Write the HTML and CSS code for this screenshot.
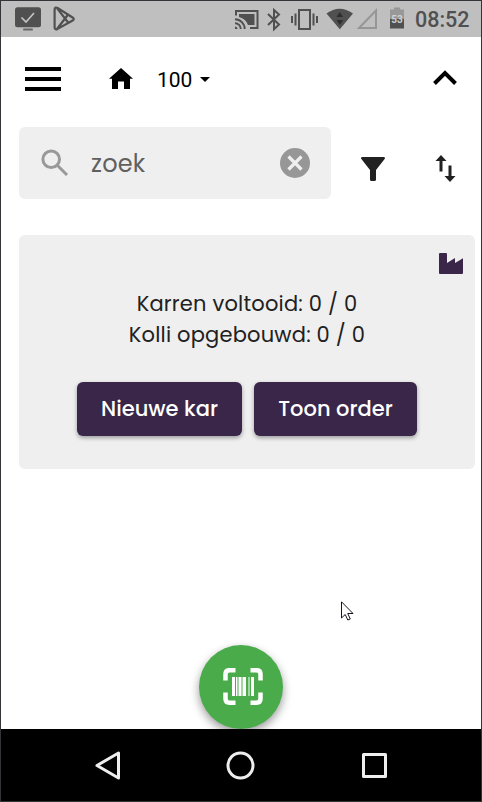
FILE: index.html
```html
<!DOCTYPE html>
<html lang="nl">
<head>
<meta charset="utf-8">
<meta name="viewport" content="width=device-width">
<title>Orders</title>
<link rel="stylesheet" href="styles.css">
</head>
<body>
<div class="phone">
  <div class="status">
    <svg class="status-left" width="64" height="36" viewBox="14 1 64 36">
      <rect x="15" y="7.3" width="26" height="20" rx="2.5" fill="#505050"/>
      <rect x="23" y="28.5" width="10" height="2" rx="1" fill="#666"/>
      <path d="M21.5 17.5l4.5 4.500 8-9" fill="none" stroke="#c4c4c4" stroke-width="1.7"/>
      <path d="M54.600 10v17q0 3.400 3 1.900l15-8.400q2.400-1.500 0-3L57.600 8q-3-1.500-3 2zM57 8.200l11.500 14.800M57 29l11.500-15" fill="none" stroke="#505050" stroke-width="2.200"/>
    </svg>
    <svg width="170" height="36" viewBox="235 1 170 36" fill="#505050">
      <g fill="none" stroke="#505050" stroke-width="2">
        <path d="M236 15.500v-4.500h21.500v17h-7.500"/>
        <path d="M235 19.300a9.700 9.700 0 0 1 9.700 9.700M235 23.200a5.800 5.800 0 0 1 5.800 5.800"/>
        <path d="M268 14l11 10.500-5 4.700V10l5 4.500L268 25" stroke-width="2"/>
        <path d="M299 10h11v19h-11zM295.500 13.500v12M292 16v7M313.500 13.500v12M317 16v7"/>
      </g>
      <path d="M239 14h15.500v11h-6.500q-2-6-9-8z"/>
      <path d="M235 26.500a2.500 2.500 0 0 1 2.500 2.500H235z"/>
      <path d="M326.500 13.500q13-9.500 26.500 0L339.800 29.300z"/>
      <path d="M336.500 17l3.300-5 3.300 5zM336.500 20l3.300 5 3.300-5z" fill="#2e2e2e"/>
      <path d="M359 28h17V10.500z" fill="none" stroke="#969696" stroke-width="2"/>
      <path d="M390 9.500h4V7.500h6v2h4V19h-14z" fill="#989898"/>
      <path d="M390 19h14v9.500h-14z"/>
      <text class="battery-level" x="397" y="22.500" text-anchor="middle">53</text>
    </svg>
    <span class="clock">08:52</span>
  </div>

  <header class="header">
    <div class="menu"><i></i><i></i><i></i></div>
    <svg class="home" width="24" height="21" viewBox="0 0 24 21"><path d="M12 0l12 10.800h-3V21h-6v-7.500H9V21H3V10.800H0z"/></svg>
    <span class="location">100</span>
    <svg class="caret" width="10" height="5" viewBox="0 0 10 5"><path d="M0 0h10L5 5z"/></svg>
    <svg class="collapse" width="26" height="16" viewBox="0 0 26 16"><path d="M2.500 13.500L13 3l10.500 10.500" fill="none" stroke="#000" stroke-width="4"/></svg>
  </header>

  <div class="tools">
    <div class="search">
      <svg class="search-icon" width="28" height="28" viewBox="0 0 28 28" fill="none" stroke="#999" stroke-width="3"><circle cx="10.200" cy="10.200" r="8.300"/><path d="M16.500 16.500l9.500 9.500"/></svg>
      <span class="search-text">zoek</span>
      <svg class="clear" width="30" height="30" viewBox="0 0 30 30"><circle cx="15" cy="15" r="15" fill="#979797"/><path d="M8.500 8.500l13 13M21.500 8.500l-13 13" stroke="#efefef" stroke-width="3.200"/></svg>
    </div>
    <svg class="filter" width="24" height="24" viewBox="0 0 24 24" fill="#212121"><path d="M1 0h22q1 0 1 1.500L15 13v9.500q0 1.500-1.500 1.500h-3Q9 24 9 22.500V13L0 1.500Q0 0 1 0z"/></svg>
    <svg class="sort" width="21" height="27" viewBox="0 0 21 27" fill="#212121"><path d="M6 0l5.500 6H7.500v10.500h-3V6H.5zM13.500 10.500h3V21h4L15 27l-5.500-6h4z"/></svg>
  </div>

  <main class="card">
    <svg class="factory" width="24" height="21" viewBox="0 0 24 21" fill="#392648"><path d="M1 0h6q1 0 1 1v9l8-5v5l8-4.700V20q0 1-1 1H1q-1 0-1-1V1q0-1 1-1z"/></svg>
    <p class="line">Karren voltooid: 0 / 0</p>
    <p class="line">Kolli opgebouwd: 0 / 0</p>
    <div class="actions">
      <button class="btn new-cart">Nieuwe kar</button>
      <button class="btn show-order">Toon order</button>
    </div>
  </main>

  <section class="stage">
    <svg class="cursor" width="14" height="21" viewBox="0 0 14 21"><path d="M.5.8v16.200l3.700-3.500 2.600 5.500 2.500-1-2.600-5.500h5.300z" fill="#fff" stroke="#161420"/></svg>
    <div class="fab">
      <svg width="40" height="38" viewBox="0 0 40 38" fill="#fff">
        <path d="M12.500 2.200H6.500Q2.500 2.200 2.500 6.200v6.300M27.500 2.200h6q4 0 4 4v6.300M12.500 34.800H6.500q-4 0-4-4v-6.300M27.500 34.800h6q4 0 4-4v-6.300" fill="none" stroke="#fff" stroke-width="4.500"/>
        <path d="M9 9h3v19H9zM13 9h1.500v19H13zM15.500 9h3v19h-3zM19.500 9h3.500v19h-3.500zM25.500 9h1v19h-1zM28 9h3v19h-3z"/>
      </svg>
    </div>
  </section>

  <nav class="navbar">
    <svg width="26" height="30" viewBox="0 0 26 30"><path d="M2 15.500L23.500 3v25z"/></svg>
    <svg width="30" height="30" viewBox="0 0 30 30"><circle cx="14.500" cy="15.500" r="12.500"/></svg>
    <svg width="26" height="30" viewBox="0 0 26 30"><path d="M2.500 4.500h22v22h-22z"/></svg>
  </nav>
</div>
</body>
</html>
```

FILE: styles.css
```css
* { box-sizing: border-box; }
body { margin: 0; background: #fff; }
svg { display: block; flex: none; }
.phone {
  width: 482px;
  height: 802px;
  border: 1px solid #353338;
  display: flex;
  flex-direction: column;
  overflow: hidden;
  color: #212121;
  font-family: Poppins, Inter, sans-serif;
}
.status {
  height: 36px;
  flex: none;
  display: flex;
  align-items: center;
  padding: 0 11px 0 13px;
  background: #bfbfbf;
}
.status-left { margin-right: 157px; }
.battery-level { font: bold 10px Roboto, sans-serif; fill: #d0d0d0; }
.clock {
  margin-left: 10px;
  padding-top: 2px;
  font: 500 21.5px/36px Roboto, sans-serif;
  color: #505050;
}
.header {
  height: 84px;
  flex: none;
  display: flex;
  align-items: center;
  padding: 0 23px 0 24px;
  color: #000;
}
.menu { width: 36px; display: grid; gap: 6px; }
.menu i { height: 4px; background: #000; }
.home { margin-left: 48px; margin-top: -1px; }
.location { margin-left: 24px; padding-top: 2px; font: 400 21px/24px Roboto, sans-serif; }
.caret { margin-left: 8px; }
.collapse { margin-left: auto; margin-top: -2px; }
.tools {
  height: 78px;
  flex: none;
  display: flex;
  padding: 6px 25px 0 18px;
  align-items: flex-start;
}
.search {
  width: 312px;
  height: 72px;
  display: flex;
  align-items: center;
  padding: 0 21px 0 22px;
  border-radius: 6px;
  background: #efefef;
}
.search-text {
  margin-left: 22px;
  font-size: 24px;
  letter-spacing: .23px;
  color: #606060;
}
.clear { margin-left: auto; }
.filter { margin: 30px 0 0 30px; }
.sort { margin: 28px 0 0 50px; }
.card {
  width: 456px;
  height: 234px;
  flex: none;
  margin: 36px 0 0 18px;
  padding-top: 18px;
  border-radius: 6px;
  background: #efefef;
}
.factory { margin: 0 12px 14px auto; }
.line {
  margin: 0;
  height: 31px;
  font-size: 21px;
  letter-spacing: .19px;
  line-height: 31px;
  text-align: center;
  white-space: nowrap;
}
.actions {
  display: flex;
  gap: 12px;
  margin: 32px 0 0 58px;
}
.btn {
  height: 54px;
  padding: 0;
  border: 0;
  border-radius: 6px;
  background: #392648;
  color: #fff;
  font: 500 21px/54px Poppins, Inter, sans-serif;
  box-shadow: 0 2px 4px rgba(0, 0, 0, .35);
  white-space: nowrap;
}
.new-cart { width: 165px; }
.show-order { width: 163px; }
.stage {
  flex: 1;
  display: flex;
  flex-direction: column;
  justify-content: space-between;
  align-items: center;
  padding-top: 132px;
  overflow: hidden;
}
.cursor { margin-left: 214px; }
.fab {
  width: 84px;
  height: 84px;
  flex: none;
  display: grid;
  place-items: center;
  border-radius: 50%;
  background: #4aab4b;
  box-shadow: 0 4px 10px rgba(0, 0, 0, .4);
}
.fab svg { margin-left: 3px; }
.navbar {
  height: 72px;
  flex: none;
  display: flex;
  justify-content: space-between;
  align-items: center;
  padding: 0 94px;
  background: #000;
}
.navbar svg {
  fill: none;
  stroke: #eee;
  stroke-width: 3;
  stroke-linejoin: round;
}
```
